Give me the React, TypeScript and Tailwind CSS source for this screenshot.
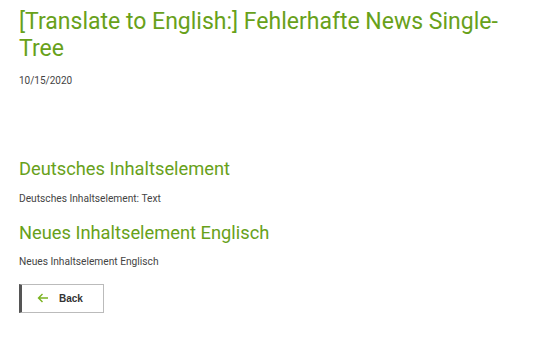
import React from 'react';

const App: React.FC = () => {
  return (
    <div className="bg-white min-h-screen px-[19px] pt-[8px] text-[#333]" style={{ fontFamily: 'Roboto, sans-serif' }}>
      <h1 className="text-[23px] leading-[27px] text-[#68a11a] font-normal">
        [Translate to English:] Fehlerhafte News Single-Tree
      </h1>
      <p className="mt-[11px] text-[10px] text-[#444]">10/15/2020</p>

      <div className="mt-[69px]">
        <h2 className="text-[18.3px] leading-[24px] text-[#68a11a]">Deutsches Inhaltselement</h2>
        <p className="mt-[10px] text-[10.2px] text-[#444]">Deutsches Inhaltselement: Text</p>
        <h2 className="mt-[15px] text-[18.3px] leading-[24px] text-[#68a11a]">Neues Inhaltselement Englisch</h2>
        <p className="mt-[9px] text-[10.2px] text-[#444]">Neues Inhaltselement Englisch</p>
      </div>

      <button className="mt-[14px] w-[85px] h-[29px] flex items-center gap-[10px] pl-[15px] border border-[#bbb] border-l-[3px] border-l-[#555] bg-white">
        <svg width="12" height="10" viewBox="0 0 12 10" fill="none" stroke="#7ab320" strokeWidth="1.4">
          <path d="M11 5H1.5M5.5 1L1.5 5l4 4" />
        </svg>
        <span className="text-[10px] font-bold text-[#333]" style={{ fontFamily: '"Liberation Sans", Arial, sans-serif' }}>Back</span>
      </button>
    </div>
  );
};

export default App;
